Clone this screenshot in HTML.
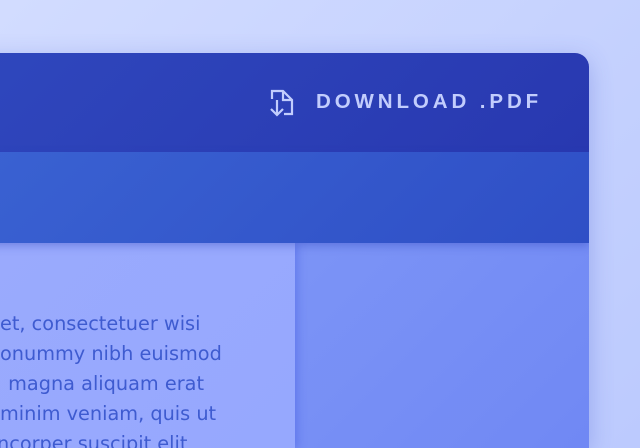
<!DOCTYPE html>
<html style="overflow:hidden;height:448px"><head><style>
body{margin:0;width:640px;height:448px;overflow:hidden;background:linear-gradient(135deg,#d2dcff,#bccafe);position:relative;font-family:"Liberation Sans",sans-serif}
.card{position:absolute;left:-30px;top:53px;width:619px;height:395px;border-radius:0 14px 0 0;overflow:hidden;box-shadow:0 6px 24px rgba(60,80,200,.3)}
.h1{position:absolute;left:0;top:0;width:100%;height:99px;background:linear-gradient(135deg,#2f47bd,#2838b0)}
.h2{position:absolute;left:0;top:99px;width:100%;height:91px;background:linear-gradient(135deg,#3a62d2,#2f4fc6);box-shadow:0 3px 8px rgba(40,60,180,.35);z-index:2}
.l{position:absolute;left:0;top:190px;width:325px;height:205px;background:linear-gradient(135deg,#9aaafd,#96a8fe);box-shadow:3px 0 8px rgba(60,80,220,.35);z-index:1}
.r{position:absolute;left:325px;top:190px;width:294px;height:205px;background:linear-gradient(135deg,#7c94f6,#7088f4)}
.dl{position:absolute;left:316px;top:90px;color:#c2cdfd;font-weight:bold;font-size:20.5px;letter-spacing:3.9px}
.t{position:absolute;color:#3e5bd0;white-space:nowrap;font-family:"DejaVu Sans","Liberation Sans",sans-serif;font-size:19.3px;z-index:3}
</style></head><body>
<div class="card"><div class="h1"></div><div class="h2"></div><div class="l"></div><div class="r"></div></div>
<svg style="position:absolute;left:266px;top:88px" width="30" height="30" viewBox="0 0 30 30" fill="none" stroke="#c2cdfd" stroke-width="2.2">
<path d="M6 11V3h11l9 9v14h-8"/><path d="M17 3v9h9"/><path d="M11 12v15M5 21l6 6 6-6"/></svg>
<div class="dl">DOWNLOAD .PDF</div>
<div class="t" style="left:0;top:312px">et, consectetuer wisi</div>
<div class="t" style="left:0;top:342px">onummy nibh euismod</div>
<div class="t" style="left:2px;top:372px">&nbsp;magna aliquam erat</div>
<div class="t" style="left:0;top:402px">minim veniam, quis ut</div>
<div class="t" style="left:-3px;top:432px">ncorper suscipit elit</div>
</body></html>
